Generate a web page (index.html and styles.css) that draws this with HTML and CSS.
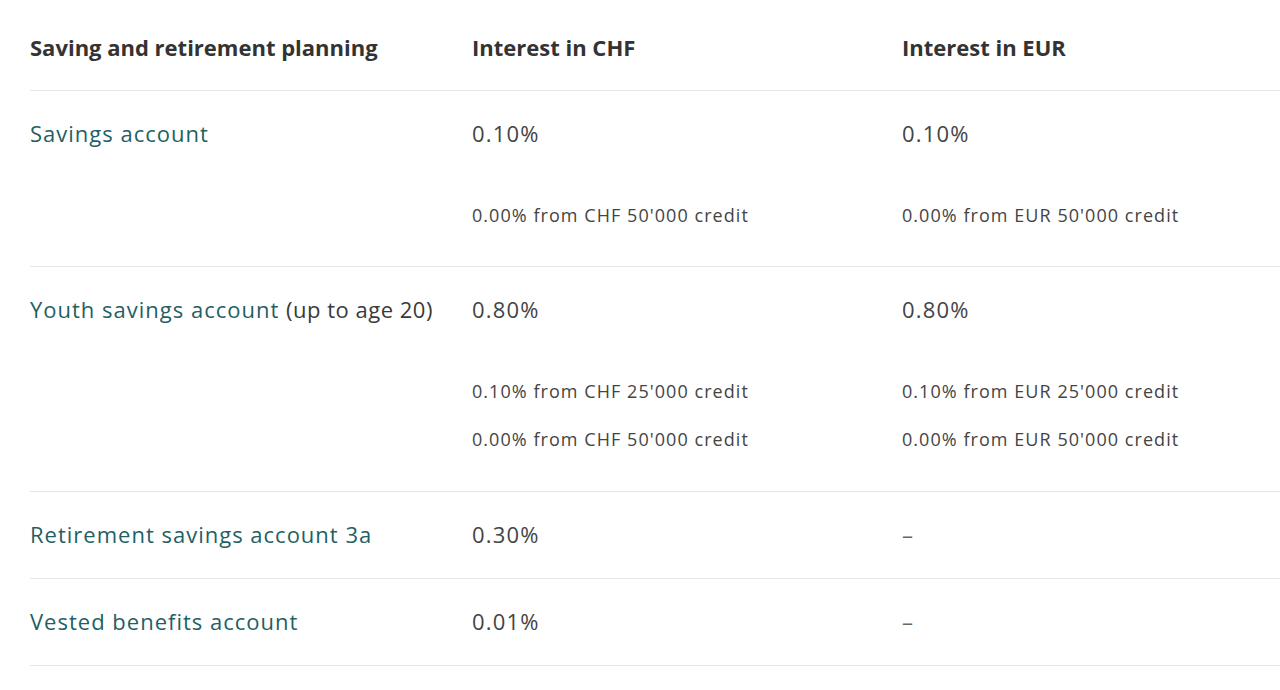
FILE: index.html
```html
<!DOCTYPE html>
<html lang="en">
<head>
<meta charset="utf-8">
<title>Saving and retirement planning</title>
<link rel="stylesheet" href="styles.css">
</head>
<body>
<div class="rates">
  <div class="row head">
    <div class="cell">Saving and retirement planning</div>
    <div class="cell">Interest in CHF</div>
    <div class="cell">Interest in EUR</div>
  </div>
  <div class="row">
    <div class="cell name"><span class="link">Savings account</span></div>
    <div class="cell">
      <div class="rate">0.10%</div>
      <div class="subs"><div class="sub">0.00% from CHF 50'000 credit</div></div>
    </div>
    <div class="cell">
      <div class="rate">0.10%</div>
      <div class="subs"><div class="sub">0.00% from EUR 50'000 credit</div></div>
    </div>
  </div>
  <div class="row">
    <div class="cell name"><span class="link">Youth savings account</span> <span class="note">(up to age 20)</span></div>
    <div class="cell">
      <div class="rate">0.80%</div>
      <div class="subs two">
        <div class="sub">0.10% from CHF 25'000 credit</div>
        <div class="sub">0.00% from CHF 50'000 credit</div>
      </div>
    </div>
    <div class="cell">
      <div class="rate">0.80%</div>
      <div class="subs two">
        <div class="sub">0.10% from EUR 25'000 credit</div>
        <div class="sub">0.00% from EUR 50'000 credit</div>
      </div>
    </div>
  </div>
  <div class="row">
    <div class="cell name"><span class="link">Retirement savings account 3a</span></div>
    <div class="cell"><div class="rate">0.30%</div></div>
    <div class="cell"><div class="rate dash">–</div></div>
  </div>
  <div class="row">
    <div class="cell name"><span class="link">Vested benefits account</span></div>
    <div class="cell"><div class="rate">0.01%</div></div>
    <div class="cell"><div class="rate dash">–</div></div>
  </div>
</div>
</body>
</html>
```
FILE: styles.css
```css
html, body {
  margin: 0;
  padding: 0;
  background: #ffffff;
}
body {
  font-family: "Open Sans", "Liberation Sans", sans-serif;
  color: #3a3a3a;
  overflow: hidden;
}
.rates {
  margin-left: 30px;
}
.row {
  display: grid;
  grid-template-columns: 442px 430px 1fr;
  border-bottom: 1px solid #e6e6e6;
  padding: 28px 0 30px;
}
.row.head {
  padding: 33px 0 29px;
  font-weight: 700;
  font-size: 22px;
  line-height: 28px;
  color: #333333;
}
.cell {
  font-size: 22px;
  line-height: 28px;
}
.row:not(.head) .cell {
  letter-spacing: 1.2px;
}
.row:not(.head) .name {
  letter-spacing: 1.0px;
}
.name .link {
  color: #1f5f65;
}
.name .note {
  color: #3a3a3a;
  letter-spacing: 0.5px;
}
.rate {
  color: #444444;
}
.dash {
  color: #666666;
}
.subs {
  margin-top: 54px;
  padding-bottom: 7px;
  display: flex;
  flex-direction: column;
  gap: 20px;
}
.subs.two {
  padding-bottom: 8px;
}
.row:not(.head) .sub {
  font-size: 18px;
  line-height: 28px;
  color: #444444;
  letter-spacing: 1.05px;
}
```
